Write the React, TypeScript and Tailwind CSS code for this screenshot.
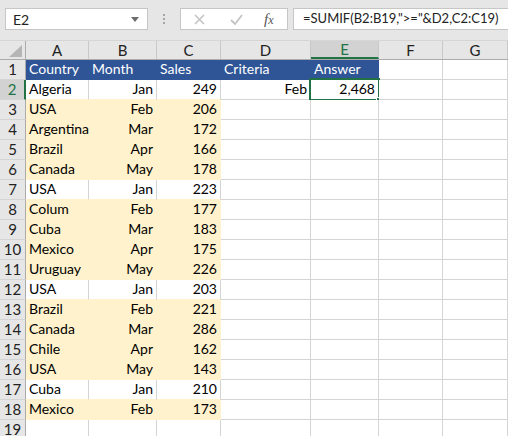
import React from 'react'

type Fill = 'none' | 'blue' | 'yellow'

const colWidths = ['w-[63px]', 'w-[68px]', 'w-[64px]', 'w-[90px]', 'w-[68px]', 'w-[64px]', 'w-[65px]']
const letters = ['A', 'B', 'C', 'D', 'E', 'F', 'G']

const data: [string, string, string][] = [
  ['Algeria', 'Jan', '249'],
  ['USA', 'Feb', '206'],
  ['Argentina', 'Mar', '172'],
  ['Brazil', 'Apr', '166'],
  ['Canada', 'May', '178'],
  ['USA', 'Jan', '223'],
  ['Colum', 'Feb', '177'],
  ['Cuba', 'Mar', '183'],
  ['Mexico', 'Apr', '175'],
  ['Uruguay', 'May', '226'],
  ['USA', 'Jan', '203'],
  ['Brazil', 'Feb', '221'],
  ['Canada', 'Mar', '286'],
  ['Chile', 'Apr', '162'],
  ['USA', 'May', '143'],
  ['Cuba', 'Jan', '210'],
  ['Mexico', 'Feb', '173'],
]

type Cell = { text: string; align: 'left' | 'right'; fill: Fill }

function buildRows(): Cell[][] {
  const rows: Cell[][] = []
  const header = ['Country', 'Month', 'Sales', 'Criteria', 'Answer']
  rows.push(
    letters.map((_, c) => ({
      text: header[c] ?? '',
      align: 'left' as const,
      fill: (c < 5 ? 'blue' : 'none') as Fill,
    })),
  )
  data.forEach(([country, month, sales], i) => {
    const fill: Fill = month === 'Jan' ? 'none' : 'yellow'
    rows.push(
      letters.map((_, c) => {
        if (c === 0) return { text: country, align: 'left' as const, fill }
        if (c === 1) return { text: month, align: 'right' as const, fill }
        if (c === 2) return { text: sales, align: 'right' as const, fill }
        if (i === 0 && c === 3) return { text: 'Feb', align: 'right' as const, fill: 'none' as Fill }
        if (i === 0 && c === 4) return { text: '2,468', align: 'right' as const, fill: 'none' as Fill }
        return { text: '', align: 'left' as const, fill: 'none' as Fill }
      }),
    )
  })
  rows.push(letters.map(() => ({ text: '', align: 'left' as const, fill: 'none' as Fill })))
  return rows
}

const fillBg: Record<Fill, string> = {
  none: 'bg-white',
  blue: 'bg-[#2f5597] text-white',
  yellow: 'bg-[#fff2cc]',
}

function rightBorder(a: Fill, b: Fill | undefined) {
  if (a === 'blue' || b === 'blue') return 'border-r-[#2f5597]'
  if (a === 'yellow' || b === 'yellow') return 'border-r-[#fff2cc]'
  return 'border-r-[#d4d4d4]'
}

function bottomBorder(a: Fill, b: Fill | undefined) {
  if (a === 'yellow' || b === 'yellow') return 'border-b-[#fff2cc]'
  if (a === 'blue') return 'border-b-[#2f5597]'
  return 'border-b-[#d4d4d4]'
}

function FormulaBar() {
  return (
    <div className="flex h-[41px] items-start border-b border-[#d5d5d5] bg-[#e6e6e6] pt-2">
      <div className="ml-[5px] flex h-[22px] w-[143px] shrink-0 items-center justify-between border border-[#c6c6c6] bg-white pl-[7px] pr-[8px] text-[14px] text-[#222]">
        <span>E2</span>
        <svg width="8" height="5" viewBox="0 0 8 5">
          <path d="M0 0h8L4 5z" fill="#6d6d6d" />
        </svg>
      </div>
      <div className="flex h-[22px] w-[32px] shrink-0 flex-col items-center justify-center gap-[2px]">
        <span className="h-[2px] w-[2px] bg-[#a6a6a6]" />
        <span className="h-[2px] w-[2px] bg-[#a6a6a6]" />
        <span className="h-[2px] w-[2px] bg-[#a6a6a6]" />
      </div>
      <div className="flex h-[22px] w-[108px] shrink-0 items-center border border-[#c6c6c6] bg-white">
        <svg className="ml-[13px]" width="11" height="11" viewBox="0 0 11 11">
          <path d="M1 1l9 9M10 1l-9 9" stroke="#c3c3c3" strokeWidth="1.5" />
        </svg>
        <svg className="ml-[25px]" width="13" height="11" viewBox="0 0 13 11">
          <path d="M1 6l4 4 7-9" stroke="#c3c3c3" strokeWidth="1.8" fill="none" />
        </svg>
        <span className="ml-[21px] font-['Liberation_Serif',serif] text-[15px] italic text-[#555]">
          f<span className="text-[12px]">x</span>
        </span>
      </div>
      <div className="ml-[5px] flex h-[22px] min-w-0 flex-1 items-center overflow-hidden border border-r-0 border-[#c6c6c6] bg-white pl-[9px] text-[13px] whitespace-nowrap text-[#222]">
        =SUMIF(B2:B19,"&gt;="&amp;D2,C2:C19)
      </div>
    </div>
  )
}

function ColumnHeaders() {
  return (
    <div className="flex h-[19px] border-b border-[#ababab] bg-[#e6e6e6]">
      <div className="relative w-[26px] shrink-0 border-r border-[#ababab]">
        <svg className="absolute right-[3px] bottom-[2px]" width="13" height="12" viewBox="0 0 13 12">
          <path d="M13 0v12H0z" fill="#b5b5b5" />
        </svg>
      </div>
      {letters.map((l, c) => (
        <div
          key={l}
          className={`flex shrink-0 items-center justify-center border-r border-[#c8c8c8] text-[15px] ${colWidths[c]} ${
            l === 'E' ? 'border-b-2 border-b-[#217346] bg-[#d2d2d2] text-[#217346]' : 'text-[#222]'
          }`}
        >
          {l}
        </div>
      ))}
    </div>
  )
}

export default function App() {
  const rows = buildRows()
  return (
    <div className="h-[436px] w-[508px] overflow-hidden bg-white font-['Lato','Liberation_Sans',sans-serif] text-[#000]">
      <FormulaBar />
      <ColumnHeaders />
      {rows.map((row, r) => (
        <div key={r} className="flex h-[20px]">
          <div
            className={`flex w-[26px] shrink-0 items-center justify-center border-r border-b border-b-[#d4d4d4] text-[15px] ${
              r === 1
                ? 'border-r-2 border-r-[#217346] bg-[#d2d2d2] text-[#217346]'
                : 'border-r-[#ababab] bg-[#e6e6e6] text-[#222]'
            }`}
          >
            {r + 1}
          </div>
          {row.map((cell, c) => {
            const below = rows[r + 1]?.[c]?.fill
            const next = row[c + 1]?.fill
            const selected = r === 1 && c === 4
            return (
              <div
                key={c}
                className={`relative flex shrink-0 items-end border-r border-b px-[3px] pb-[1px] text-[14px] leading-[18px] whitespace-nowrap ${
                  colWidths[c]
                } ${fillBg[cell.fill]} ${rightBorder(cell.fill, next)} ${bottomBorder(cell.fill, below)} ${
                  cell.align === 'right' ? 'justify-end' : 'justify-start'
                }`}
              >
                {cell.text}
                {selected && (
                  <>
                    <div className="pointer-events-none absolute top-[-2px] right-[-2px] bottom-[-2px] left-[-2px] border-2 border-[#217346]" />
                    <div className="absolute right-[-4px] bottom-[-4px] h-[6px] w-[6px] border border-white bg-[#217346]" />
                  </>
                )}
              </div>
            )
          })}
        </div>
      ))}
    </div>
  )
}
